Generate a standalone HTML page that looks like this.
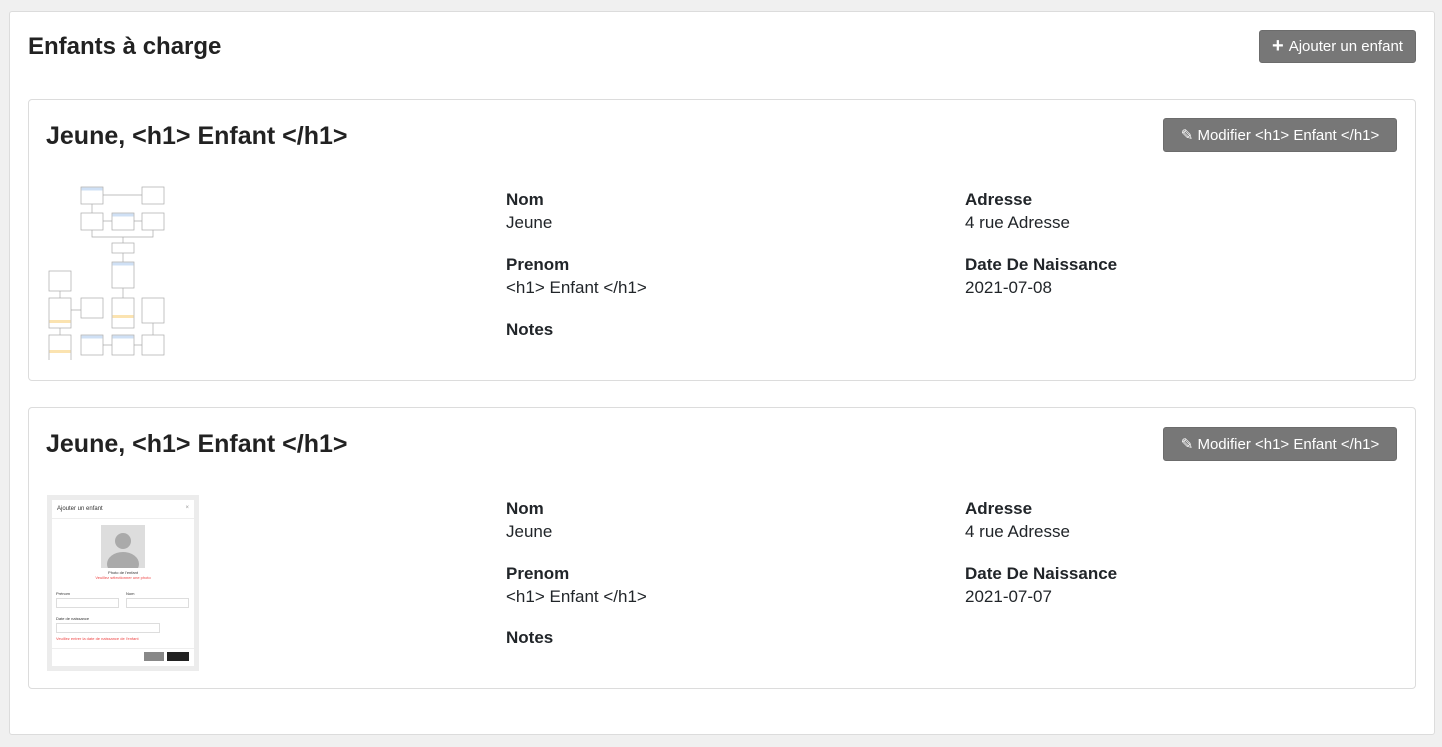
<!DOCTYPE html>
<html><head><meta charset="utf-8"><style>
*{box-sizing:border-box;margin:0;padding:0}
body{width:1442px;height:747px;background:#f0f0f0;font-family:"Liberation Sans",sans-serif;color:#212529;position:relative;overflow:hidden}
.outer{position:absolute;left:9px;top:11px;width:1426px;height:724px;background:#fff;border:1px solid #dcdcdc;border-radius:3px}
h2{position:absolute;left:28px;top:33px;font-size:24px;font-weight:600;color:#222}
.btn{position:absolute;background:#777;color:#fff;border:1px solid #6c6c6c;border-radius:3px;font-size:15px;display:flex;align-items:center;justify-content:center;gap:5px}
.card{position:absolute;left:28px;width:1388px;height:282px;border:1px solid #dcdcdc;border-radius:4px;background:#fff}
.card h3{position:absolute;left:17px;top:22px;font-size:25px;font-weight:600;color:#222}
.f{position:absolute;font-size:17px;line-height:23px}
.f b{font-weight:600;display:block}
</style></head><body>
<div class="outer"></div>
<h2>Enfants à charge</h2>
<div class="btn" style="left:1259px;top:30px;width:157px;height:33px"><span style="font-size:20px;font-weight:bold">+</span>Ajouter un enfant</div>

<div class="card" style="top:99px">
<h3>Jeune, &lt;h1&gt; Enfant &lt;/h1&gt;</h3>
<div class="btn" style="left:1134px;top:18px;width:234px;height:34px">✎ Modifier &lt;h1&gt; Enfant &lt;/h1&gt;</div>
<svg style="position:absolute;left:18px;top:85px" width="120" height="175">
<g fill="#fff" stroke="#aaa" stroke-width="0.7">
<rect x="34" y="2" width="22" height="17"/><rect x="95" y="2" width="22" height="17"/>
<rect x="34" y="28" width="22" height="17"/><rect x="65" y="28" width="22" height="17"/><rect x="95" y="28" width="22" height="17"/>
<rect x="65" y="58" width="22" height="10"/><rect x="65" y="77" width="22" height="26"/>
<rect x="2" y="86" width="22" height="20"/><rect x="2" y="113" width="22" height="30"/><rect x="34" y="113" width="22" height="20"/><rect x="65" y="113" width="22" height="30"/><rect x="95" y="113" width="22" height="25"/>
<rect x="2" y="150" width="22" height="26"/><rect x="34" y="150" width="22" height="20"/><rect x="65" y="150" width="22" height="20"/><rect x="95" y="150" width="22" height="20"/>
<path d="M56 10H95M45 19V28M56 36H65M87 36H95M45 45V52H76V58M106 45V52H76M76 68V77M76 103V113M24 125H34M13 106V113M13 143V150M56 160H65M87 160H95M106 138V150" fill="none"/>
</g>
<g fill="#cfe0f5"><rect x="34.5" y="2.5" width="21" height="3"/><rect x="65.5" y="28.5" width="21" height="3"/><rect x="65.5" y="77.5" width="21" height="3"/><rect x="34.5" y="150.5" width="21" height="3"/><rect x="65.5" y="150.5" width="21" height="3"/></g>
<g fill="#fbe3b0"><rect x="2.5" y="135" width="21" height="3"/><rect x="65.5" y="130" width="21" height="3"/><rect x="2.5" y="165" width="21" height="3"/></g>
</svg>
<div class="f" style="left:477px;top:88px"><b>Nom</b>Jeune</div>
<div class="f" style="left:477px;top:153px"><b>Prenom</b>&lt;h1&gt; Enfant &lt;/h1&gt;</div>
<div class="f" style="left:477px;top:218px"><b>Notes</b></div>
<div class="f" style="left:936px;top:88px"><b>Adresse</b>4 rue Adresse</div>
<div class="f" style="left:936px;top:153px"><b>Date De Naissance</b>2021-07-08</div>
</div>

<div class="card" style="top:407px">
<h3>Jeune, &lt;h1&gt; Enfant &lt;/h1&gt;</h3>
<div class="btn" style="left:1134px;top:19px;width:234px;height:34px">✎ Modifier &lt;h1&gt; Enfant &lt;/h1&gt;</div>
<div style="position:absolute;left:18px;top:87px;width:152px;height:176px;background:#ececec">
<div style="position:absolute;left:5px;top:5px;width:142px;height:166px;background:#fff;font-size:6px;color:#333">
<div style="position:absolute;left:5px;top:6px">Ajouter un enfant</div><div style="position:absolute;right:5px;top:5px;color:#999">×</div>
<div style="position:absolute;left:0;right:0;top:18px;border-top:1px solid #eee"></div>
<div style="position:absolute;left:49px;top:25px;width:44px;height:43px;background:#ddd;overflow:hidden"><div style="position:absolute;left:14px;top:8px;width:16px;height:16px;border-radius:50%;background:#aaa"></div><div style="position:absolute;left:6px;top:27px;width:32px;height:24px;border-radius:50%;background:#aaa"></div></div>
<div style="position:absolute;left:0;right:0;top:70px;text-align:center;font-size:4px">Photo de l'enfant<br><span style="color:#e44">Veuillez sélectionner une photo</span></div>
<div style="position:absolute;left:4px;top:91px;font-size:4px">Prénom</div><div style="position:absolute;left:74px;top:91px;font-size:4px">Nom</div>
<div style="position:absolute;left:4px;top:98px;width:63px;height:10px;border:1px solid #ddd"></div><div style="position:absolute;left:74px;top:98px;width:63px;height:10px;border:1px solid #ddd"></div>
<div style="position:absolute;left:4px;top:116px;font-size:4px">Date de naissance</div>
<div style="position:absolute;left:4px;top:123px;width:104px;height:10px;border:1px solid #ddd"></div>
<div style="position:absolute;left:4px;top:136px;font-size:4px;color:#e44">Veuillez entrer la date de naissance de l'enfant</div>
<div style="position:absolute;left:0;right:0;top:148px;border-top:1px solid #eee"></div>
<div style="position:absolute;left:92px;top:152px;width:20px;height:9px;background:#888"></div><div style="position:absolute;left:115px;top:152px;width:22px;height:9px;background:#222"></div>
</div></div>
<div class="f" style="left:477px;top:89px"><b>Nom</b>Jeune</div>
<div class="f" style="left:477px;top:154px"><b>Prenom</b>&lt;h1&gt; Enfant &lt;/h1&gt;</div>
<div class="f" style="left:477px;top:218px"><b>Notes</b></div>
<div class="f" style="left:936px;top:89px"><b>Adresse</b>4 rue Adresse</div>
<div class="f" style="left:936px;top:154px"><b>Date De Naissance</b>2021-07-07</div>
</div>
</body></html>
